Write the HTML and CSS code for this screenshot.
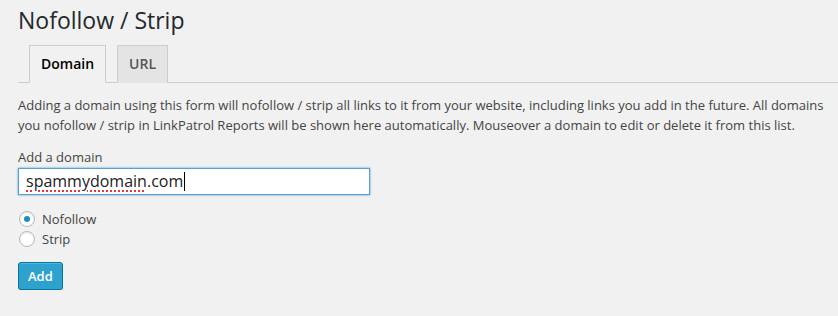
FILE: index.html
```html
<!DOCTYPE html>
<html lang="en">
<head>
  <meta charset="UTF-8">
  <title>Nofollow / Strip</title>
  <link rel="stylesheet" href="styles.css">
</head>
<body>
  <div class="wrap">
    <h2 class="page-title">Nofollow / Strip</h2>

    <nav class="nav-tabs">
      <a class="nav-tab active" href="#">Domain</a>
      <a class="nav-tab" href="#">URL</a>
    </nav>

    <p class="intro">Adding a domain using this form will nofollow / strip all links to it from your website, including links you add in the future. All domains you nofollow / strip in LinkPatrol Reports will be shown here automatically. Mouseover a domain to edit or delete it from this list.</p>

    <form class="domain-form">
      <label class="field-label" for="domain">Add a domain</label>
      <div class="field">
        <span class="text-input" id="domain"><span class="typo">spammydomain</span>.com<span class="caret"></span></span>
      </div>

      <div class="radios">
        <label class="radio"><span class="radio-dot checked"></span>Nofollow</label>
        <label class="radio"><span class="radio-dot"></span>Strip</label>
      </div>

      <button type="button" class="btn-primary">Add</button>
    </form>
  </div>
</body>
</html>
```

FILE: styles.css
```css
body {
  margin: 0;
  background: #f1f1f1;
  color: #444;
  font-family: "Open Sans", sans-serif;
  font-size: 13px;
  line-height: 1.4em;
}

.wrap {
  padding: 0 0 0 18px;
}

.page-title {
  margin: 0;
  padding: 6px 0 0 0;
  font-size: 23px;
  font-weight: 400;
  line-height: 29px;
  color: #23282d;
}

.nav-tabs {
  display: flex;
  margin-top: 10px;
  padding-left: 11px;
  border-bottom: 1px solid #ccc;
  gap: 11px;
}

.nav-tab {
  display: block;
  margin-bottom: -1px;
  padding: 5px 11px 6px;
  border: 1px solid #ccc;
  border-bottom: none;
  background: #e4e4e4;
  color: #555;
  font-size: 14px;
  font-weight: 600;
  line-height: 25px;
  text-decoration: none;
}

.nav-tab.active {
  background: #f1f1f1;
  color: #000;
  border-bottom: 1px solid #f1f1f1;
}

.intro {
  margin: 12px 0 0;
  padding-right: 14px;
  line-height: 20px;
  color: #444;
}

.domain-form {
  margin-top: 12px;
}

.field-label {
  display: block;
  line-height: 20px;
  color: #444;
}

.field {
  margin-top: 1px;
}

.text-input {
  display: flex;
  align-items: center;
  box-sizing: border-box;
  width: 352px;
  height: 27px;
  padding: 0 7px;
  border: 1px solid #5b9dd9;
  box-shadow: 0 0 2px rgba(30, 140, 190, 0.8);
  background: #fff;
  color: #222;
  font-size: 16px;
}

.typo {
  text-decoration: underline dotted #e33;
  text-decoration-thickness: 2px;
  text-underline-offset: 3px;
}

.caret {
  display: inline-block;
  width: 1px;
  height: 19px;
  margin-left: 1px;
  background: #000;
}

.radios {
  margin-top: 14px;
}

.radio {
  display: flex;
  align-items: center;
  height: 20px;
  color: #444;
}

.radio-dot {
  position: relative;
  box-sizing: border-box;
  width: 16px;
  height: 16px;
  margin: 0 7px 0 1px;
  border: 1px solid #b4b9be;
  border-radius: 50%;
  background: #fff;
  box-shadow: inset 0 1px 2px rgba(0, 0, 0, 0.1);
}

.radio-dot.checked::after {
  content: "";
  position: absolute;
  top: 4px;
  left: 4px;
  width: 6px;
  height: 6px;
  border-radius: 50%;
  background: #1e8cbe;
}

.btn-primary {
  display: block;
  margin-top: 13px;
  height: 28px;
  padding: 0 9px 1px;
  border: 1px solid #0074a2;
  border-radius: 3px;
  background: #2ea2cc;
  box-shadow: inset 0 1px 0 rgba(120, 200, 230, 0.5), 0 1px 0 rgba(0, 0, 0, 0.15);
  color: #fff;
  font-family: "Open Sans", sans-serif;
  font-size: 13px;
  font-weight: 600;
  cursor: pointer;
}
```
